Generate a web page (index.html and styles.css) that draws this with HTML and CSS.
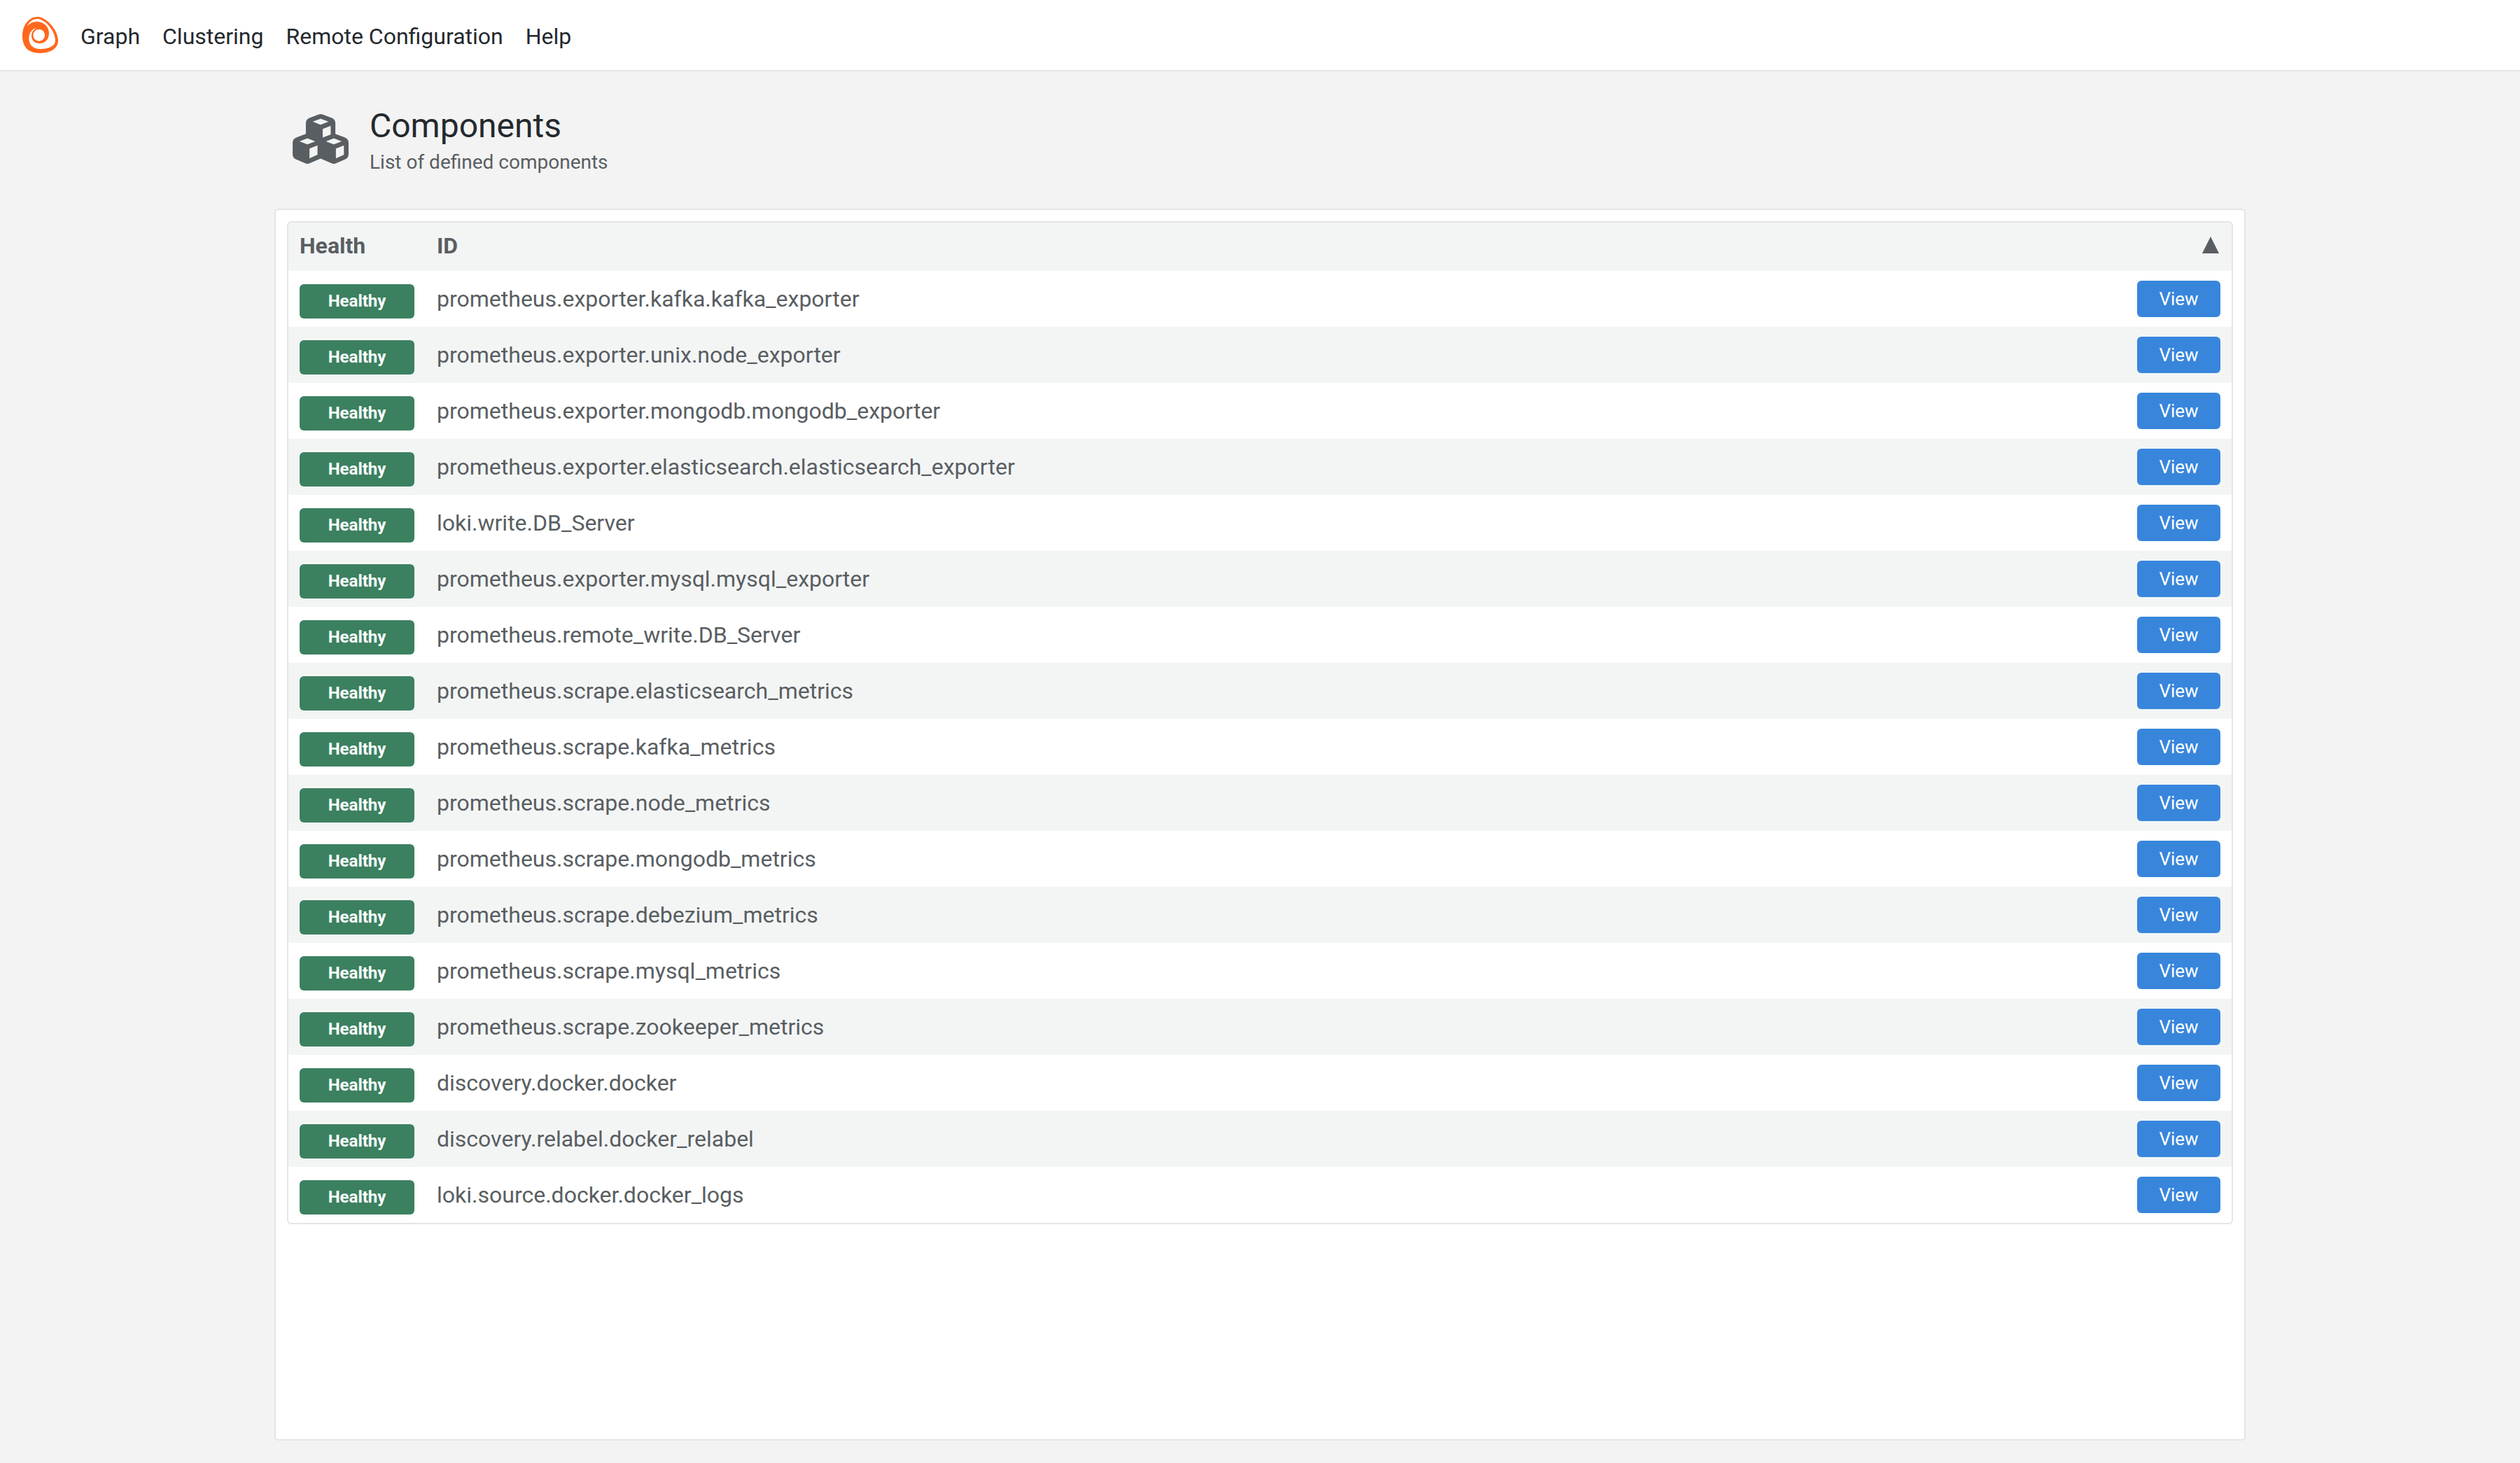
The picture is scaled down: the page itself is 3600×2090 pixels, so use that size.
FILE: index.html
```html
<!DOCTYPE html>
<html lang="en">
<head>
<meta charset="UTF-8">
<meta name="viewport" content="width=device-width, initial-scale=1">
<title>Components</title>
<link rel="stylesheet" href="styles.css">
</head>
<body>

<nav class="navbar">
  <a class="logo" href="#" aria-label="Home">
    <svg viewBox="0 0 153 156"><path fill="#ff671d" fill-rule="evenodd" d="M66 0C98 0 153 52 153 103C153 137 118 156 76 156C28 156 0 133 0 82C0 38 26 0 66 0ZM19 43C29 19 45 9 65 9C96 9 141 60 141 102C141 126 112 138 78 138C44 138 28 119 28 92C28 68 42 50 62 47C48 53 39 66 39 81C39 101 53 114 73 114C97 114 114 98 114 70C114 42 92 21 61 21C42 21 28 30 19 43ZM71 54a25 25 0 1 0 .1 0Z"/></svg>
  </a>
  <ul class="menu">
    <li><a href="#">Graph</a></li>
    <li><a href="#">Clustering</a></li>
    <li><a href="#">Remote Configuration</a></li>
    <li><a href="#">Help</a></li>
  </ul>
</nav>

<main class="page">
  <header class="page-header">
    <svg class="page-icon" viewBox="0 0 576 512"><path fill="currentColor" d="M290.8 48.6l78.4 29.7L288 109.5 206.8 78.3l78.4-29.7c1.8-.7 3.8-.7 5.7 0zM136 92.5V204.7c-1.3 .4-2.6 .8-3.9 1.3l-96 36.4C14.4 250.6 0 271.5 0 294.7V413.9c0 22.2 13.1 42.3 33.5 51.3l96 42.2c14.4 6.3 30.7 6.3 45.1 0L288 457.5l113.5 49.9c14.4 6.3 30.7 6.3 45.1 0l96-42.2c20.3-8.9 33.5-29.1 33.5-51.3V294.7c0-23.3-14.4-44.1-36.1-52.4l-96-36.4c-1.3-.5-2.6-.9-3.9-1.3V92.5c0-23.3-14.4-44.1-36.1-52.4l-96-36.4c-12.8-4.8-26.9-4.8-39.7 0l-96 36.4C150.4 48.4 136 69.3 136 92.5zM392 210.6l-82.4 31.2V152.6L392 121v89.6zM154.8 250.9l78.4 29.7L152 311.7 70.8 280.6l78.4-29.7c1.8-.7 3.8-.7 5.7 0zm18.8 204.4V354.8L256 323.2v95.9l-82.4 36.2zM421.2 250.9c1.8-.7 3.8-.7 5.7 0l78.4 29.7L424 311.7l-81.2-31.1 78.4-29.7zM523.2 421.2l-77.6 34.1V354.8L528 323.2v90.7c0 3.2-1.9 6-4.8 7.3z"/></svg>
    <div>
      <h1>Components</h1>
      <p>List of defined components</p>
    </div>
  </header>

  <section class="panel">
    <div class="table-box">
      <table>
        <thead>
          <tr>
            <th class="col-health">Health</th>
            <th>ID</th>
            <th class="col-action"><button class="sort" type="button" aria-label="Sort"><svg viewBox="0 0 24 24"><path fill="currentColor" d="M12 0L24 24H0Z"/></svg></button></th>
          </tr>
        </thead>
        <tbody>
          <tr><td><span class="badge">Healthy</span></td><td>prometheus.exporter.kafka.kafka_exporter</td><td class="col-action"><a class="view" href="#">View</a></td></tr>
          <tr><td><span class="badge">Healthy</span></td><td>prometheus.exporter.unix.node_exporter</td><td class="col-action"><a class="view" href="#">View</a></td></tr>
          <tr><td><span class="badge">Healthy</span></td><td>prometheus.exporter.mongodb.mongodb_exporter</td><td class="col-action"><a class="view" href="#">View</a></td></tr>
          <tr><td><span class="badge">Healthy</span></td><td>prometheus.exporter.elasticsearch.elasticsearch_exporter</td><td class="col-action"><a class="view" href="#">View</a></td></tr>
          <tr><td><span class="badge">Healthy</span></td><td>loki.write.DB_Server</td><td class="col-action"><a class="view" href="#">View</a></td></tr>
          <tr><td><span class="badge">Healthy</span></td><td>prometheus.exporter.mysql.mysql_exporter</td><td class="col-action"><a class="view" href="#">View</a></td></tr>
          <tr><td><span class="badge">Healthy</span></td><td>prometheus.remote_write.DB_Server</td><td class="col-action"><a class="view" href="#">View</a></td></tr>
          <tr><td><span class="badge">Healthy</span></td><td>prometheus.scrape.elasticsearch_metrics</td><td class="col-action"><a class="view" href="#">View</a></td></tr>
          <tr><td><span class="badge">Healthy</span></td><td>prometheus.scrape.kafka_metrics</td><td class="col-action"><a class="view" href="#">View</a></td></tr>
          <tr><td><span class="badge">Healthy</span></td><td>prometheus.scrape.node_metrics</td><td class="col-action"><a class="view" href="#">View</a></td></tr>
          <tr><td><span class="badge">Healthy</span></td><td>prometheus.scrape.mongodb_metrics</td><td class="col-action"><a class="view" href="#">View</a></td></tr>
          <tr><td><span class="badge">Healthy</span></td><td>prometheus.scrape.debezium_metrics</td><td class="col-action"><a class="view" href="#">View</a></td></tr>
          <tr><td><span class="badge">Healthy</span></td><td>prometheus.scrape.mysql_metrics</td><td class="col-action"><a class="view" href="#">View</a></td></tr>
          <tr><td><span class="badge">Healthy</span></td><td>prometheus.scrape.zookeeper_metrics</td><td class="col-action"><a class="view" href="#">View</a></td></tr>
          <tr><td><span class="badge">Healthy</span></td><td>discovery.docker.docker</td><td class="col-action"><a class="view" href="#">View</a></td></tr>
          <tr><td><span class="badge">Healthy</span></td><td>discovery.relabel.docker_relabel</td><td class="col-action"><a class="view" href="#">View</a></td></tr>
          <tr><td><span class="badge">Healthy</span></td><td>loki.source.docker.docker_logs</td><td class="col-action"><a class="view" href="#">View</a></td></tr>
        </tbody>
      </table>
    </div>
  </section>
</main>

</body>
</html>
```
FILE: styles.css
```css
:root{
  --bg:#f3f3f3;--stripe:#f3f5f5;--border:#e4e5e6;--text:#24292e;--muted:#595e62;--green:#3b8160;--blue:#3886dc;
}
*{box-sizing:border-box;}
body{margin:0;min-height:100vh;display:flex;flex-direction:column;background:var(--bg);color:var(--text);font-family:Roboto,sans-serif;font-size:32px;line-height:48px;}
a{color:inherit;text-decoration:none;}

.navbar{display:flex;align-items:center;gap:32px;height:102px;padding:0 32px;background:#fff;border-bottom:2px solid var(--border);}
.logo svg{display:block;width:51px;height:52px;}
.menu{display:flex;gap:32px;margin:0;padding:4px 0 0;list-style:none;}

.page{flex:1;display:flex;flex-direction:column;padding:50px 392px 32px;}
.page-header{display:flex;align-items:center;gap:30px;padding:0 26px 42px;}
.page-icon{width:80px;height:71px;margin-bottom:12px;color:var(--muted);}
.page-header h1{margin:0;font-size:48px;line-height:56px;font-weight:400;}
.page-header p{margin:0;font-size:28px;line-height:48px;color:var(--muted);}

.panel{flex:1;padding:16px;background:#fff;border:2px solid var(--border);border-radius:6px;}
.table-box{border:2px solid var(--border);border-radius:6px;overflow:hidden;}
table{width:100%;border-collapse:collapse;color:var(--muted);}
th,td{height:80px;padding:0 16px;text-align:left;}
th{height:69px;padding-bottom:3px;background:var(--stripe);}
tbody tr:nth-child(even){background:var(--stripe);}
.col-health{width:196px;}
.col-action{text-align:right;}
.sort{display:inline-block;padding:0 2px;border:none;background:none;color:inherit;cursor:pointer;}
.sort svg{display:block;width:24px;height:24px;}
.badge{display:block;width:164px;margin-top:6px;border-radius:6px;background:var(--green);color:#fff;font-size:24px;line-height:49px;font-weight:700;text-align:center;}
.view{display:block;width:119px;margin-left:auto;border-radius:6px;background:var(--blue);color:#fff;font-size:26px;line-height:52px;text-align:center;}
```
